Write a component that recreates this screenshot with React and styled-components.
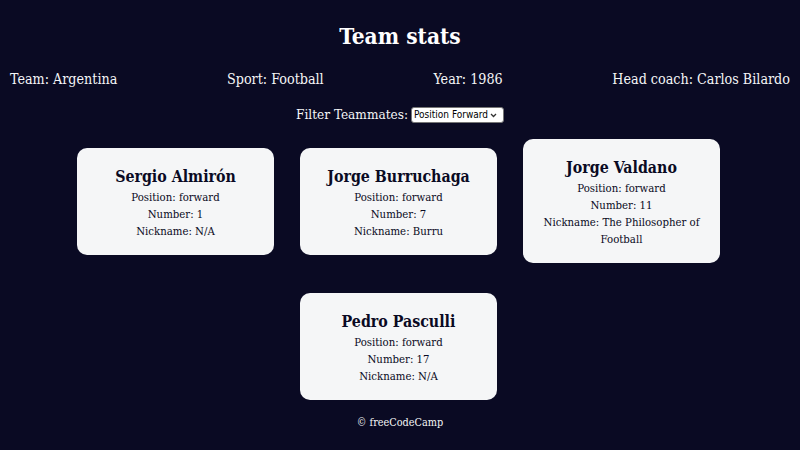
import React from 'react';
import styled, { createGlobalStyle } from 'styled-components';

const players = [
  { name: 'Sergio Almirón', position: 'forward', number: 1, nickname: 'N/A' },
  { name: 'Jorge Burruchaga', position: 'forward', number: 7, nickname: 'Burru' },
  { name: 'Jorge Valdano', position: 'forward', number: 11, nickname: 'The Philosopher of Football' },
  { name: 'Pedro Pasculli', position: 'forward', number: 17, nickname: 'N/A' },
];

const GlobalStyle = createGlobalStyle`
  *, *::before, *::after {
    margin: 0;
    padding: 0;
    box-sizing: border-box;
  }

  html, body {
    background: #0a0a23;
  }

  body {
    font-family: "DejaVu Serif Condensed", "DejaVu Serif", serif;
    font-stretch: condensed;
    text-align: center;
    padding: 10px;
    min-height: 450px;
  }
`;

const Page = styled.div`
  display: flex;
  flex-direction: column;
`;

const Title = styled.h1`
  color: #ffffff;
  font-size: 22.5px;
  font-weight: 700;
  line-height: 34px;
  margin-top: 9px;
`;

const Stats = styled.div`
  display: flex;
  justify-content: space-between;
  color: #f5f6f7;
  font-size: 14.2px;
  line-height: 22px;
  margin-top: 15px;
`;

const Options = styled.div`
  display: flex;
  justify-content: center;
  align-items: center;
  margin-top: 14px;
  gap: 3px;
`;

const Label = styled.label`
  color: #f5f6f7;
  font-size: 13.5px;
  line-height: 20px;
`;

const SelectWrap = styled.span`
  position: relative;
  display: inline-flex;
  margin-top: 2px;

  svg {
    position: absolute;
    right: 7px;
    top: 6px;
    pointer-events: none;
  }
`;

const Select = styled.select`
  appearance: none;
  font-family: "Liberation Sans Narrow", "DejaVu Sans Condensed", sans-serif;
  font-stretch: condensed;
  font-size: 10px;
  line-height: 14px;
  height: 16px;
  width: 93px;
  padding: 0 0 0 2px;
  border: 1px solid #767676;
  border-radius: 3px;
  background: #ffffff;
  color: #000;
`;

const Cards = styled.div`
  display: flex;
  flex-wrap: wrap;
  justify-content: center;
  align-items: center;
  gap: 30px 26px;
  margin: 15px 0 0 67px;
  width: 643px;
`;

const Card = styled.div`
  width: 197px;
  background: #f5f6f7;
  border-radius: 10px;
  padding: 18px 12px 15px;
  color: #0a0a23;
`;

const Name = styled.h2`
  font-size: 15.8px;
  font-weight: 700;
  line-height: 22px;
  margin-bottom: 1px;
`;

const Line = styled.p`
  font-size: 11.3px;
  line-height: 17px;
`;

const Copyright = styled.p`
  color: #f5f6f7;
  font-size: 10.8px;
  line-height: 18px;
  margin-top: 14px;
`;

const App = () => {
  return (
    <>
      <GlobalStyle />
      <Page>
        <Title>Team stats</Title>
        <Stats>
          <span>Team: Argentina</span>
          <span>Sport: Football</span>
          <span>Year: 1986</span>
          <span>Head coach: Carlos Bilardo</span>
        </Stats>
        <Options>
          <Label htmlFor="players">Filter Teammates:</Label>
          <SelectWrap>
            <Select id="players" defaultValue="forward">
              <option value="all">All Players</option>
              <option value="forward">Position Forward</option>
              <option value="midfielder">Position Midfielder</option>
              <option value="defender">Position Defender</option>
              <option value="goalkeeper">Position Goalkeeper</option>
            </Select>
            <svg width="7" height="5" viewBox="0 0 7 5">
              <path d="M1 1l2.5 2.5L6 1" fill="none" stroke="#333" strokeWidth="1.3" />
            </svg>
          </SelectWrap>
        </Options>
        <Cards>
          {players.map((p) => (
            <Card key={p.name}>
              <Name>{p.name}</Name>
              <Line>Position: {p.position}</Line>
              <Line>Number: {p.number}</Line>
              <Line>Nickname: {p.nickname}</Line>
            </Card>
          ))}
        </Cards>
        <Copyright>© freeCodeCamp</Copyright>
      </Page>
    </>
  );
};

export default App;
